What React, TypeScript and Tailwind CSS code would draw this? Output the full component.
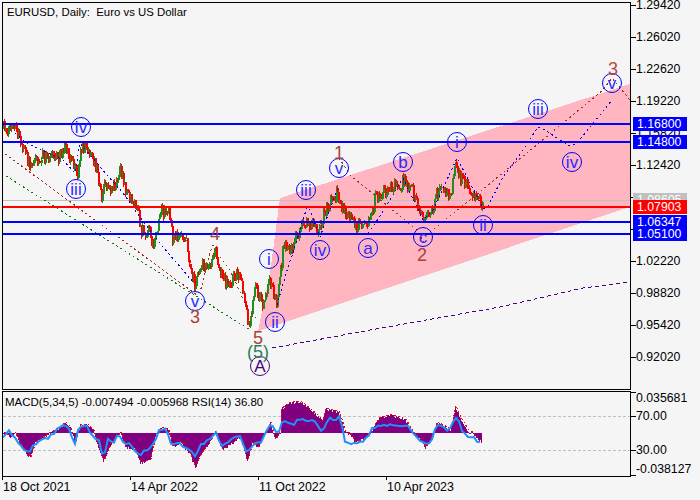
import React from "react";

type P = [number, number];

const interp = (pts: P[], x: number) => {
  if (x <= pts[0][0]) return pts[0][1];
  for (let i = 1; i < pts.length; i++) {
    if (x <= pts[i][0]) {
      const [x0, y0] = pts[i - 1];
      const [x1, y1] = pts[i];
      return y0 + ((y1 - y0) * (x - x0)) / (x1 - x0);
    }
  }
  return pts[pts.length - 1][1];
};

let seed = 12345;
const rnd = () => {
  seed = (seed * 1664525 + 1013904223) % 4294967296;
  return seed / 4294967296;
};

const pricePath: P[] = [
  [3, 128], [10, 127], [15, 132], [19, 137], [21, 145], [25, 155], [30, 165], [33, 160], [40, 157], [50, 158], [60, 157],
  [65, 146], [70, 158], [73, 165], [77, 175], [80, 150], [84, 146], [90, 155], [95, 165], [98, 180], [101, 197], [105, 185],
  [110, 188], [114, 185], [118, 176], [120, 172], [124, 188], [130, 195], [135, 203], [138, 213], [140, 232], [150, 230],
  [152, 248], [157, 225], [160, 210], [170, 213], [172, 240], [180, 232], [186, 237], [189, 263], [195, 285], [200, 265],
  [210, 262], [215, 250], [222, 280], [230, 285], [237, 270], [243, 295], [248, 325], [255, 290], [262, 305], [268, 280],
  [271, 280], [276, 307], [283, 245], [290, 250], [295, 237], [305, 222], [315, 227], [318, 232], [325, 210], [337, 192],
  [340, 205], [345, 215], [355, 225], [367, 230], [375, 197], [385, 190], [393, 187], [403, 182], [412, 190], [417, 207],
  [423, 220], [432, 210], [436, 192], [445, 190], [449, 200], [455, 165], [460, 178], [470, 190], [482, 203],
];

type Bar = { x: number; y: number; h: number; by: number; bh: number; up: boolean };
const bars: Bar[] = [];
{
  let prev = pricePath[0][1];
  for (let x = 3; x <= 482; x++) {
    const c = interp(pricePath, x) + (rnd() - 0.5) * 14;
    const top = Math.min(prev, c) - rnd() * 3;
    const bot = Math.max(prev, c) + rnd() * 3;
    bars.push({
      x,
      y: Math.round(top),
      h: Math.max(1, Math.round(bot - top)),
      by: Math.round(Math.min(prev, c)),
      bh: Math.max(1, Math.round(Math.abs(prev - c))),
      up: c < prev,
    });
    prev = c;
  }
}

const histPath: P[] = [
  [3, 433], [10, 437], [15, 433], [20, 445], [30, 458], [35, 443], [50, 433], [55, 431], [65, 423], [70, 428], [75, 443],
  [80, 425], [87, 425], [93, 431], [100, 453], [103, 462], [110, 445], [120, 433], [125, 447], [135, 450], [140, 463],
  [150, 460], [155, 437], [160, 428], [168, 430], [172, 447], [180, 442], [190, 455], [195, 468], [200, 455], [210, 442],
  [215, 432], [222, 450], [232, 443], [240, 437], [247, 462], [252, 443], [258, 448], [265, 433], [270, 423], [275, 440],
  [280, 432], [281, 409], [290, 403], [300, 402], [310, 410], [318, 417], [322, 422], [325, 409], [338, 412], [342, 423],
  [345, 433], [350, 434], [355, 443], [365, 438], [372, 430], [378, 419], [390, 415], [405, 420], [412, 432], [420, 440],
  [425, 448], [432, 440], [436, 423], [445, 427], [450, 430], [455, 407], [460, 418], [467, 430], [472, 433], [481, 442],
];

const rsiPath: P[] = [
  [3, 436], [10, 431], [15, 438], [20, 445], [25, 450], [30, 453], [35, 443], [40, 440], [48, 438], [55, 432], [60, 428],
  [65, 425], [70, 430], [75, 445], [78, 430], [82, 427], [88, 428], [92, 435], [100, 440], [103, 458], [108, 440], [113, 445],
  [118, 435], [125, 442], [133, 447], [140, 455], [150, 448], [155, 440], [160, 430], [167, 430], [172, 445], [178, 443],
  [190, 450], [195, 458], [200, 445], [210, 440], [215, 432], [222, 445], [232, 440], [240, 435], [246, 452], [252, 445],
  [260, 443], [270, 425], [275, 430], [280, 430], [283, 418], [290, 425], [300, 420], [310, 420], [318, 425], [322, 432],
  [327, 420], [340, 418], [343, 432], [345, 440], [355, 445], [360, 442], [365, 440], [372, 430], [380, 425], [390, 425],
  [405, 425], [412, 430], [418, 440], [425, 445], [432, 440], [436, 425], [445, 428], [450, 430], [455, 415], [460, 425],
  [465, 435], [472, 437], [481, 445],
];

const hist = Array.from({ length: 479 }, (_, i) => {
  const x = i + 3;
  const v = interp(histPath, x) + (rnd() - 0.5) * 3;
  return { x, y: Math.round(Math.min(v, 433)), h: Math.max(1, Math.round(Math.abs(v - 433))) };
});
const rsiPts = Array.from({ length: 160 }, (_, i) => {
  const x = i * 3 + 3;
  return `${x},${(interp(rsiPath, x) + (rnd() - 0.5) * 4).toFixed(1)}`;
}).join(" ");
const sigPts = histPath.map(([x, y]) => `${x + 1},${y - 1}`).join(" ");

const toStr = (p: P[]) => p.map((a) => a.join(",")).join(" ");

const dotted: { c: string; p: P[]; d?: string }[] = [
  { c: "#008000", p: [[6, 176], [250, 330]] },
  { c: "#a52a2a", p: [[5, 154], [197, 295], [202, 287], [205, 273], [210, 253], [213, 245], [217, 253], [230, 270], [248, 310], [258, 320]] },
  { c: "#a52a2a", p: [[339, 158], [350, 175], [417, 230], [424, 242]] },
  { c: "#a52a2a", p: [[430, 232], [470, 200], [510, 167], [603, 90], [612, 78], [630, 100]] },
  { c: "#0000ff", p: [[15, 133], [25, 142], [37, 148], [63, 160], [75, 173], [80, 143], [97, 163], [107, 175], [123, 193], [140, 217], [163, 247], [193, 282]] },
  { c: "#0000ff", p: [[277, 305], [288, 267], [293, 253], [307, 207], [310, 210], [320, 237], [338, 187]] },
  { c: "#0000ff", p: [[368, 233], [373, 227], [388, 203], [403, 178], [423, 220], [433, 210], [457, 158], [480, 202], [483, 208], [487, 208], [503, 177], [523, 150], [538, 127], [545, 130], [560, 140], [570, 146], [577, 143], [612, 100]] },
  { c: "#4b0082", p: [[272, 348], [300, 343], [370, 330], [500, 307], [583, 288], [630, 282]], d: "4 3" },
];

const circled: { t: string; x: number; y: number; c?: string }[] = [
  { t: "iv", x: 81, y: 127 }, { t: "iii", x: 76, y: 189 }, { t: "v", x: 195, y: 301 }, { t: "i", x: 269, y: 259 },
  { t: "ii", x: 275, y: 322 }, { t: "iii", x: 306, y: 190 }, { t: "iv", x: 320, y: 250 }, { t: "v", x: 339, y: 168 },
  { t: "a", x: 368, y: 248 }, { t: "b", x: 403, y: 162 }, { t: "c", x: 423, y: 237 }, { t: "i", x: 457, y: 142 },
  { t: "ii", x: 483, y: 225 }, { t: "iii", x: 538, y: 109 }, { t: "iv", x: 572, y: 162 }, { t: "v", x: 612, y: 83 },
  { t: "A", x: 260, y: 366, c: "#4b0082" },
];

const plain: { t: string; x: number; y: number; c: string }[] = [
  { t: "3", x: 195, y: 316, c: "#a5423a" }, { t: "4", x: 215, y: 233, c: "#a5423a" }, { t: "5", x: 258, y: 337, c: "#a5423a" },
  { t: "(5)", x: 258, y: 351, c: "#2e7d5a" }, { t: "1", x: 339, y: 152, c: "#a5423a" }, { t: "2", x: 422, y: 254, c: "#a5423a" },
  { t: "3", x: 613, y: 68, c: "#c0463c" },
];

const hLines: { y: number; c: string }[] = [
  { y: 123, c: "#0000ff" }, { y: 141, c: "#0000ff" }, { y: 206, c: "#ff0000" }, { y: 221, c: "#0000ff" }, { y: 233, c: "#0000ff" },
];

const ticks = [5, 37, 69, 101, 133, 165, 197, 229, 261, 293, 325, 357];
const prices: { t: string; y: number }[] = [
  { t: "1.29420", y: 5 }, { t: "1.26020", y: 37 }, { t: "1.22620", y: 69 }, { t: "1.19220", y: 101 }, { t: "1.15820", y: 133 },
  { t: "1.12420", y: 165 }, { t: "1.02220", y: 261 }, { t: "0.98820", y: 293 }, { t: "0.95420", y: 325 }, { t: "0.92020", y: 357 },
];
const tags: { t: string; y: number; bg: string }[] = [
  { t: "1.16800", y: 117, bg: "bg-[#0000ff]" },
  { t: "1.14800", y: 135, bg: "bg-[#0000ff]" },
  { t: "1.08605", y: 193, bg: "bg-[#c0c0c0]" },
  { t: "1.07903", y: 200, bg: "bg-[#ff0000]" },
  { t: "1.06347", y: 215, bg: "bg-[#0000ff]" },
  { t: "1.05100", y: 227, bg: "bg-[#0000ff]" },
];
const subLabels: { t: string; y: number; tick: number }[] = [
  { t: "0.035681", y: 398, tick: 392 },
  { t: "70.00", y: 416, tick: 416 },
  { t: "30.00", y: 450, tick: 450 },
  { t: "-0.038127", y: 469, tick: 475 },
];
const dates = ["18 Oct 2021", "14 Apr 2022", "11 Oct 2022", "10 Apr 2023"];

export default function App() {
  return (
    <div className="w-[700px] h-[500px] overflow-hidden bg-[#f5f5f5] pt-[2px] pl-[2px] font-['Liberation_Sans',sans-serif] text-[12.3px] leading-[14px] text-black flex flex-col">
      <div className="flex h-[388px]">
        <div className="relative w-[629px] h-[388px] border border-black">
          <svg width={627} height={386} viewBox="3 3 627 386" className="block">
            <polygon points="258,331 270,273 280,198 630,84 630,207" fill="#ffb6c1" shapeRendering="crispEdges" />
            <rect x={3} y={200} width={627} height={1} fill="#c0c0c0" />
            <g shapeRendering="crispEdges">
              {bars.map((b) => (
                <g key={b.x}>
                  <rect x={b.x} y={b.y} width={1} height={b.h} fill={b.up ? "#228b22" : "#ff0000"} />
                  <rect x={b.x} y={b.by} width={2} height={b.bh} fill={b.up ? "#228b22" : "#ff0000"} />
                </g>
              ))}
            </g>
            <g fill="none" strokeWidth={1} shapeRendering="crispEdges">
              {dotted.map((d, i) => (
                <polyline key={i} points={toStr(d.p)} stroke={d.c} strokeDasharray={d.d ?? "2 3"} />
              ))}
            </g>
            {hLines.map((l) => (
              <rect key={l.y} x={3} y={l.y} width={627} height={2} fill={l.c} />
            ))}
            {circled.map((c, i) => (
              <g key={i}>
                <circle cx={c.x} cy={c.y} r={9.5} fill="none" stroke={c.c ?? "#0000ff"} strokeWidth={1} />
                <text x={c.x} y={c.y + 6} textAnchor="middle" fontSize={17} fill={c.c ?? "#2a2aff"}>
                  {c.t}
                </text>
              </g>
            ))}
            {plain.map((c, i) => (
              <text key={i} x={c.x} y={c.y + 7} textAnchor="middle" fontSize={18} fill={c.c}>
                {c.t}
              </text>
            ))}
          </svg>
          <span className="absolute left-[4px] top-[1px] whitespace-pre text-[11.4px] leading-[16px]">EURUSD, Daily:  Euro vs US Dollar</span>
        </div>
        <div className="relative w-[69px] h-[388px]">
          {ticks.map((y) => (
            <div key={y} className="absolute left-0 w-[5px] h-px bg-black" style={{ top: y - 2 }} />
          ))}
          {prices.map((p) => (
            <span key={p.t} className="absolute left-[5px] leading-[10px]" style={{ top: p.y - 7 }}>
              {p.t}
            </span>
          ))}
          {tags.map((t) => (
            <div key={t.t} className={`absolute left-[2px] w-[54px] h-[14px] pl-[4px] text-white ${t.bg}`} style={{ top: t.y - 2 }}>
              {t.t}
            </div>
          ))}
        </div>
      </div>

      <div className="flex h-[86px] mt-px">
        <div className="relative w-[629px] h-[86px] border border-black">
          <svg width={627} height={84} viewBox="3 392 627 84" className="block">
            <line x1={3} x2={630} y1={416.5} y2={416.5} stroke="#c0c0c0" strokeDasharray="3 2" />
            <line x1={3} x2={630} y1={450.5} y2={450.5} stroke="#c0c0c0" strokeDasharray="3 2" />
            <g shapeRendering="crispEdges">
              {hist.map((h) => (
                <rect key={h.x} x={h.x} y={h.y} width={1} height={h.h} fill="#800080" />
              ))}
              <polyline points={sigPts} fill="none" stroke="#ff0000" strokeDasharray="2 2" />
            </g>
            <polyline points={rsiPts} fill="none" stroke="#1e90ff" strokeWidth={2} />
          </svg>
          <span className="absolute left-[2px] top-[2px] whitespace-pre text-[11.5px] leading-[16px]">MACD(5,34,5) -0.007494 -0.005968 RSI(14) 36.80</span>
        </div>
        <div className="relative w-[69px] h-[86px]">
          {subLabels.map((s) => (
            <React.Fragment key={s.t}>
              <div className="absolute left-0 w-[5px] h-px bg-black" style={{ top: s.tick - 391 }} />
              <span className="absolute left-[5px]" style={{ top: s.y - 391 - 7 }}>
                {s.t}
              </span>
            </React.Fragment>
          ))}
        </div>
      </div>

      <div className="flex">
        {dates.map((d) => (
          <div key={d} className="w-[128px]">
            <div className="w-px h-[3px] bg-black" />
            <div className="pl-px text-[12.4px] leading-[14px]">{d}</div>
          </div>
        ))}
      </div>
    </div>
  );
}
